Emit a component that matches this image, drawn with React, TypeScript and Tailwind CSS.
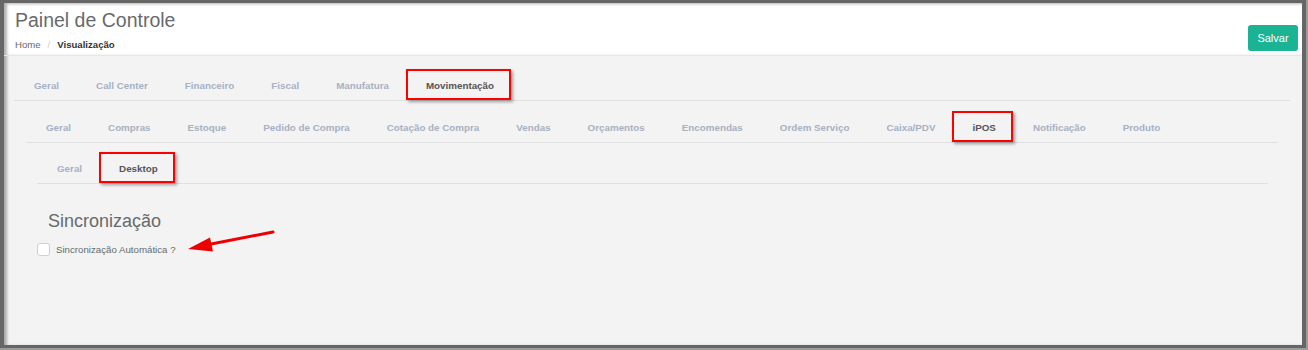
import React from "react";

function Tab({ label, active }: { label: string; active?: boolean }) {
  return (
    <div
      className={
        active
          ? "flex h-[31px] items-center border-2 border-[#ff0000] pt-[3px] pl-[18px] pr-[15px] text-[9.8px] font-bold text-[#555] shadow-[2px_2px_3px_rgba(0,0,0,0.35)] whitespace-nowrap"
          : "flex h-[31px] items-center border-2 border-transparent pt-[3px] pl-[18px] pr-[15px] text-[9.8px] font-bold text-[#a7b1c2] whitespace-nowrap"
      }
    >
      {label}
    </div>
  );
}

function TabRow({ items, active }: { items: string[]; active: string }) {
  return (
    <div className="flex border-b border-[#e0e0e0]">
      {items.map((t) => (
        <Tab key={t} label={t} active={t === active} />
      ))}
    </div>
  );
}

export default function App() {
  return (
    <div className="relative h-[350px] w-[1308px] bg-[#9c9c9c] font-['Liberation_Sans',Arial,sans-serif]">
      <div className="h-[348px] w-[1306px] border-t-[3px] border-l-4 border-r-4 border-b-[3px] border-[#666]">
        <div className="flex h-full w-full flex-col bg-[#f3f3f4] shadow-[inset_3px_1px_3px_rgba(0,0,0,0.3)]">
          {/* Header */}
          <div className="flex justify-between border-b border-[#e7e7e7] bg-white pl-[11px] pr-[4px] shadow-[inset_3px_1px_3px_rgba(0,0,0,0.3)]">
            <div className="flex flex-col pt-[6px] pb-[4px]">
              <div className="text-[19.5px] leading-[22px] text-[#676a6c]">Painel de Controle</div>
              <div className="mt-[8px] flex items-center text-[9.6px] leading-[12px]">
                <span className="text-[#676a6c]">Home</span>
                <span className="px-[7px] text-[#cccccc]">/</span>
                <span className="font-bold text-[#333]">Visualização</span>
              </div>
            </div>
            <div className="pt-[22px]">
              <button className="flex h-[26px] w-[50px] items-center justify-center rounded-[3px] bg-[#1ab394] text-[11px] text-white">
                Salvar
              </button>
            </div>
          </div>

          {/* Body */}
          <div className="pt-[13px] pl-[10px] pr-[12px]">
            <TabRow
              items={["Geral", "Call Center", "Financeiro", "Fiscal", "Manufatura", "Movimentação"]}
              active="Movimentação"
            />
            <div className="mt-[10px] px-[12px]">
              <TabRow
                items={[
                  "Geral",
                  "Compras",
                  "Estoque",
                  "Pedido de Compra",
                  "Cotação de Compra",
                  "Vendas",
                  "Orçamentos",
                  "Encomendas",
                  "Ordem Serviço",
                  "Caixa/PDV",
                  "iPOS",
                  "Notificação",
                  "Produto",
                ]}
                active="iPOS"
              />
              <div className="mt-[9px] pl-[11px] pr-[10px]">
                <TabRow items={["Geral", "Desktop"]} active="Desktop" />
                <div className="mt-[27px] pl-[11px] text-[18px] leading-[20px] text-[#676a6c]">
                  Sincronização
                </div>
                <div className="mt-[12px] flex items-center gap-[6px]">
                  <div className="h-[13px] w-[13px] rounded-[3px] border border-[#cfcfcf] bg-white" />
                  <span className="text-[9.7px] leading-[13px] text-[#676a6c]">Sincronização Automática ?</span>
                </div>
              </div>
            </div>
          </div>
        </div>
      </div>

      {/* Red annotation arrow */}
      <svg className="pointer-events-none absolute left-0 top-0" width="1308" height="350" viewBox="0 0 1308 350">
        <line x1="273" y1="232" x2="206" y2="245" stroke="#ee0000" strokeWidth="3" strokeLinecap="round" />
        <polygon points="188,249 210,237.5 213,251.5" fill="#ee0000" />
      </svg>
    </div>
  );
}
